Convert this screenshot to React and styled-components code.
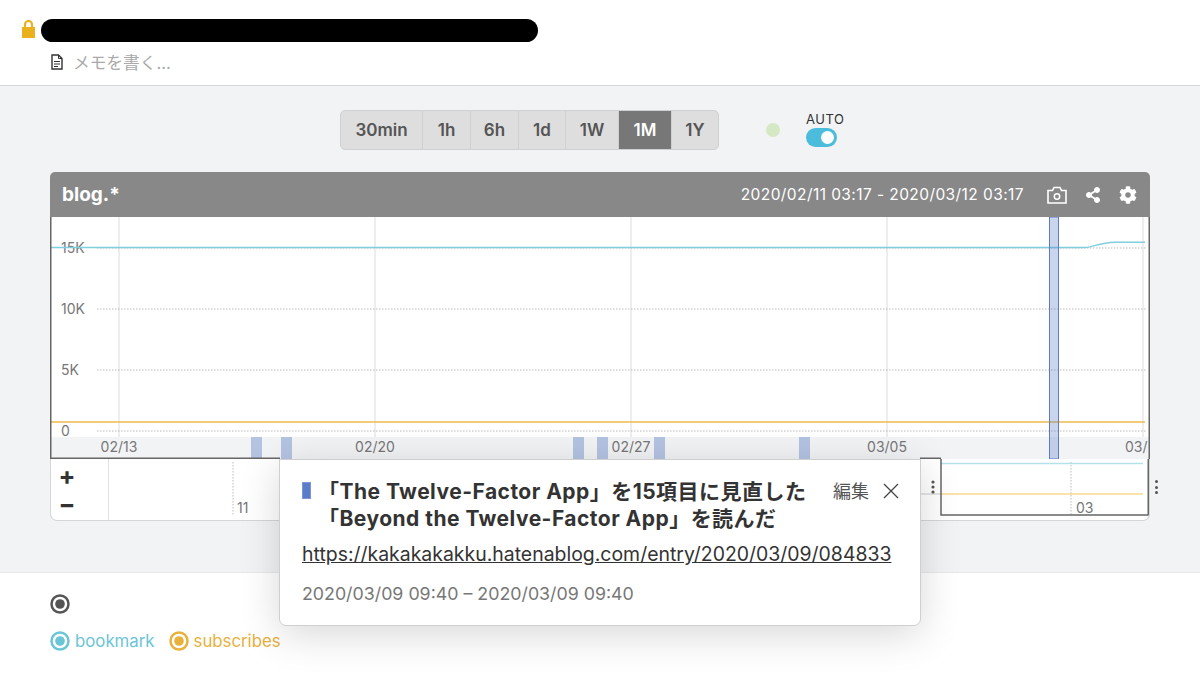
import React from 'react';
import styled, { createGlobalStyle } from 'styled-components';
import { FaShareAlt, FaCog } from 'react-icons/fa';

const GlobalStyle = createGlobalStyle`
  html, body {
    margin: 0;
    padding: 0;
    background: #fff;
    font-family: "Inter", "Noto Sans CJK JP", sans-serif;
    overflow: hidden;
  }
`;

const Page = styled.div`
  width: 1200px;
  height: 693px;
  display: flex;
  flex-direction: column;
`;

const TopBar = styled.header`
  height: 86px;
  flex: none;
  border-bottom: 1px solid #d6d7da;
  background: #fff;
  padding: 19px 0 0 22px;
  box-sizing: border-box;
`;

const TitleRow = styled.div`
  display: flex;
  align-items: center;
  gap: 6px;
  height: 23px;
`;

const Redacted = styled.div`
  width: 497px;
  height: 23px;
  background: #000;
  border-radius: 12px;
`;

const MemoRow = styled.div`
  display: flex;
  align-items: center;
  gap: 10px;
  margin: 10px 0 0 29px;
  height: 20px;
  color: #aaa;
  font-size: 16.7px;
`;

const Main = styled.main`
  height: 487px;
  flex: none;
  background: #f2f3f5;
  border-bottom: 1px solid #e8e9eb;
  padding: 24px 50px 0;
  box-sizing: border-box;
`;

const Controls = styled.div`
  display: flex;
  height: 40px;
  padding-left: 290px;
  align-items: center;
`;

const RangeGroup = styled.div`
  display: flex;
  height: 40px;
  box-sizing: border-box;
  border: 1px solid #cfd0d2;
  border-radius: 5px;
  background: #dedede;
  overflow: hidden;
`;

const RangeButton = styled.div`
  width: ${(p) => p.$w}px;
  display: flex;
  align-items: center;
  justify-content: center;
  box-sizing: border-box;
  border-right: ${(p) => (p.$last ? 'none' : '1px solid #cfd0d2')};
  background: ${(p) => (p.$active ? '#777' : 'transparent')};
  color: ${(p) => (p.$active ? '#fff' : '#555')};
  font-size: 17px;
  font-weight: 600;
`;

const StatusDot = styled.div`
  width: 14px;
  height: 14px;
  border-radius: 50%;
  background: #d5e8c4;
  margin-left: 47px;
`;

const AutoBox = styled.div`
  margin-left: 26px;
  display: flex;
  flex-direction: column;
  align-items: flex-start;
  margin-top: -2px;
`;

const AutoLabel = styled.div`
  font-size: 13px;
  line-height: 16px;
  color: #333;
  letter-spacing: 0.5px;
`;

const Toggle = styled.div`
  width: 31px;
  height: 19px;
  margin-top: 1px;
  border-radius: 10px;
  background: #4bbcdc;
  position: relative;

  &::after {
    content: '';
    position: absolute;
    top: 3px;
    right: 3px;
    width: 13px;
    height: 13px;
    border-radius: 50%;
    background: #fff;
  }
`;

const Card = styled.section`
  position: relative;
  width: 1100px;
  margin-top: 22px;
  height: 349px;
`;

const CardHeader = styled.div`
  height: 45px;
  background: #888;
  border-radius: 5px 5px 0 0;
  color: #fff;
  display: flex;
  align-items: center;
  padding: 0 13px 0 12px;
`;

const CardTitle = styled.div`
  font-size: 19px;
  font-weight: 700;
  flex: 1;
`;

const Period = styled.div`
  font-size: 15.5px;
  letter-spacing: 0.42px;
  margin-right: 23px;
`;

const HeaderIcons = styled.div`
  display: flex;
  align-items: center;
  gap: 18px;
`;

const ChartSvg = styled.svg`
  display: block;
  width: 1100px;
  height: 242px;
  background: #fff;
`;

const MiniRow = styled.div`
  display: flex;
  height: 62px;
  background: #fff;
  border: 1px solid #d5d6d8;
  border-top: none;
  border-radius: 0 0 7px 7px;
  box-sizing: border-box;
  overflow: hidden;
`;

const ZoomButtons = styled.div`
  width: 58px;
  flex: none;
  display: flex;
  flex-direction: column;
  align-items: center;
  padding: 3px 25px 0 0;
  box-sizing: border-box;
  border-right: 1px solid #e2e2e2;
  font-size: 25px;
  line-height: 28px;
  font-weight: 700;
  color: #333;
`;

const MiniSvg = styled.svg`
  display: block;
  flex: none;
  width: 1040px;
  height: 62px;
`;

const OuterHandle = styled.div`
  position: absolute;
  left: 1105px;
  top: 308px;
  display: flex;
  flex-direction: column;
  gap: 2.5px;

  span {
    width: 3px;
    height: 3px;
    border-radius: 50%;
    background: #555;
  }
`;

const Popup = styled.div`
  position: absolute;
  left: 229px;
  top: 287px;
  width: 642px;
  height: 167px;
  box-sizing: border-box;
  background: #fff;
  border: 1px solid #cfcfcf;
  border-radius: 0 0 7px 7px;
  box-shadow: 0 8px 40px rgba(0, 0, 0, 0.16);
  padding: 18px 21px 0 22px;
  z-index: 2;
`;

const PopupHead = styled.div`
  display: flex;
  align-items: flex-start;
`;

const Marker = styled.div`
  width: 9px;
  height: 17px;
  flex: none;
  margin-top: 4px;
  background: #5b7cc8;
  border: 1px solid #7c97d6;
  box-sizing: border-box;
`;

const PopupTitle = styled.div`
  flex: 1;
  margin-left: 7px;
  font-size: 21px;
  line-height: 27px;
  font-weight: 700;
  letter-spacing: 0.47px;
  color: #333;
  white-space: nowrap;
`;

const EditLink = styled.div`
  font-size: 18px;
  line-height: 27px;
  color: #555;
  margin-right: 14px;
`;

const CloseIcon = styled.svg`
  margin-top: 5px;
  display: block;
`;

const PopupLink = styled.a`
  display: block;
  margin-top: 9px;
  font-size: 19.45px;
  line-height: 27px;
  color: #333;
  text-decoration: underline;
  white-space: nowrap;
`;

const PopupDate = styled.div`
  margin-top: 15px;
  font-size: 17.8px;
  line-height: 22px;
  color: #777;
`;

const Footer = styled.footer`
  flex: 1;
  background: #fff;
  padding: 21px 0 0 50px;
`;

const Legend = styled.div`
  display: flex;
  align-items: center;
  margin-top: 17px;
  gap: 14px;
`;

const LegendItem = styled.div`
  display: flex;
  align-items: center;
  gap: 5px;
  font-size: 16.8px;
  color: ${(p) => p.$color};
`;

const Ring = ({ color }) => (
  <svg width="20" height="20" viewBox="0 0 20 20" style={{ display: 'block' }}>
    <circle cx="10" cy="10" r="8.5" fill="none" stroke={color} strokeWidth="2.5" />
    <circle cx="10" cy="10" r="4.8" fill={color} />
  </svg>
);

const LockIcon = () => (
  <svg width="13" height="18" viewBox="0 0 13 18" style={{ display: 'block', marginTop: '-3px' }}>
    <path d="M3 8V4.500a3.500 3.500 0 0 1 7 0V8" fill="none" stroke="#ebb01e" strokeWidth="2.200" />
    <rect x="0" y="7" width="13" height="11" fill="#ebb01e" />
  </svg>
);

const NoteIcon = () => (
  <svg width="12" height="16" viewBox="0 0 12 16" style={{ display: 'block' }}>
    <path d="M1 1h6.500L11 4.500V15H1z" fill="none" stroke="#333" strokeWidth="1.400" />
    <path d="M7.500 1v3.500H11M3 7.500h6M3 10h6M3 12.500h4" fill="none" stroke="#333" strokeWidth="1" />
  </svg>
);

const CameraIcon = () => (
  <svg width="20" height="18" viewBox="0 0 20 18" style={{ display: 'block' }}>
    <path d="M1 4.500h4.500L7 1.500h6l1.500 3H19V17H1z" fill="none" stroke="#fff" strokeWidth="1.600" />
    <circle cx="10" cy="10.500" r="2.700" fill="none" stroke="#fff" strokeWidth="1.500" />
  </svg>
);

const ranges = [
  { label: '30min', w: 82 },
  { label: '1h', w: 48 },
  { label: '6h', w: 48 },
  { label: '1d', w: 47 },
  { label: '1W', w: 53 },
  { label: '1M', w: 53, active: true },
  { label: '1Y', w: 46, last: true },
];

// chart coordinates are page x minus 50, page y minus 217
const gridX = [69, 325, 581, 837, 1093];
const dateLabels = ['02/13', '02/20', '02/27', '03/05', '03/'];
const levels = [
  { label: '15K', y: 31 },
  { label: '10K', y: 92 },
  { label: '5K', y: 153 },
  { label: '0', y: 214 },
];
const notes = [201, 231, 523, 547, 604, 749];

const Chart = () => (
  <ChartSvg viewBox="0 0 1100 242">
    <rect x="1" y="220" width="1098" height="22" fill="#f2f3f5" />
    {gridX.map((x) => (
      <line key={x} x1={x} x2={x} y1="0" y2="220" stroke="#dcdcdc" />
    ))}
    {levels.map((l) => (
      <g key={l.label}>
        <line x1="47" x2="1097" y1={l.y} y2={l.y} stroke="#bbb" strokeDasharray="1.500 1.500" />
        <text x="11" y={l.y + 5} fontSize="14" fill="#777">{l.label}</text>
      </g>
    ))}
    {gridX.map((x, i) => (
      <text
        key={x}
        x={i === 4 ? x - 18 : x}
        y="235"
        fontSize="14"
        fill="#777"
        textAnchor={i === 4 ? 'start' : 'middle'}
      >
        {dateLabels[i]}
      </text>
    ))}
    {notes.map((x) => (
      <rect key={x} x={x} y="220" width="11" height="22" fill="#b3c3e2" />
    ))}
    <path d="M1 30.500H1035C1042 30.500 1050 25.500 1065 25.300H1095" fill="none" stroke="#7fd0dc" strokeWidth="1.500" />
    <line x1="1" x2="1095" y1="205" y2="205" stroke="#ecb84f" strokeWidth="1.500" />
    <rect x="999.500" y="0" width="9" height="242" fill="#5b7cc8" fillOpacity="0.32" stroke="#5b7cc8" />
    <path d="M0.750 0V241.250M1099.250 0V242" fill="none" stroke="#666" strokeWidth="1.500" />
    <line x1="0" x2="230" y1="241.250" y2="241.250" stroke="#666" strokeWidth="1.500" />
    <line x1="870" x2="891" y1="241.250" y2="241.250" stroke="#666" strokeWidth="1.500" />
  </ChartSvg>
);

// mini chart x is page x minus 109, y is page y minus 459
const MiniChart = () => (
  <MiniSvg viewBox="0 0 1040 62">
    <line x1="124" x2="124" y1="3" y2="56" stroke="#bbb" strokeDasharray="1.500 1.500" />
    <text x="128" y="54" fontSize="14" fill="#777">11</text>
    <line x1="962" x2="962" y1="3" y2="56" stroke="#bbb" strokeDasharray="1.500 1.500" />
    <text x="967" y="54" fontSize="14" fill="#777">03</text>
    <line x1="832" x2="1034" y1="4.500" y2="4.500" stroke="#b5e2e8" strokeWidth="1.500" />
    <line x1="812" x2="832" y1="35" y2="35" stroke="#ccc" />
    <line x1="832" x2="1034" y1="35" y2="35" stroke="#f8d98f" strokeWidth="1.500" />
    <path d="M832 0V56H1039.250V0" fill="none" stroke="#666" strokeWidth="1.500" />
    <circle cx="824" cy="23" r="1.600" fill="#555" />
    <circle cx="824" cy="28" r="1.600" fill="#555" />
    <circle cx="824" cy="33" r="1.600" fill="#555" />
  </MiniSvg>
);

export default function App() {
  return (
    <Page>
      <GlobalStyle />
      <TopBar>
        <TitleRow>
          <LockIcon />
          <Redacted />
        </TitleRow>
        <MemoRow>
          <NoteIcon />
          メモを書く...
        </MemoRow>
      </TopBar>
      <Main>
        <Controls>
          <RangeGroup>
            {ranges.map((r) => (
              <RangeButton key={r.label} $w={r.w} $active={r.active} $last={r.last}>
                {r.label}
              </RangeButton>
            ))}
          </RangeGroup>
          <StatusDot />
          <AutoBox>
            <AutoLabel>AUTO</AutoLabel>
            <Toggle />
          </AutoBox>
        </Controls>
        <Card>
          <CardHeader>
            <CardTitle>blog.*</CardTitle>
            <Period>2020/02/11 03:17 - 2020/03/12 03:17</Period>
            <HeaderIcons>
              <CameraIcon />
              <FaShareAlt size={16} color="#fff" />
              <FaCog size={18} color="#fff" />
            </HeaderIcons>
          </CardHeader>
          <Chart />
          <MiniRow>
            <ZoomButtons>
              <span>+</span>
              <span>−</span>
            </ZoomButtons>
            <MiniChart />
          </MiniRow>
          <OuterHandle>
            <span />
            <span />
            <span />
          </OuterHandle>
          <Popup>
            <PopupHead>
              <Marker />
              <PopupTitle>
                「The Twelve-Factor App」を15項目に見直した
                <br />
                「Beyond the Twelve-Factor App」を読んだ
              </PopupTitle>
              <EditLink>編集</EditLink>
              <CloseIcon width="16" height="16" viewBox="0 0 16 16">
                <path d="M1 1l14 14M15 1L1 15" stroke="#444" strokeWidth="1.300" />
              </CloseIcon>
            </PopupHead>
            <PopupLink>https://kakakakakku.hatenablog.com/entry/2020/03/09/084833</PopupLink>
            <PopupDate>2020/03/09 09:40 – 2020/03/09 09:40</PopupDate>
          </Popup>
        </Card>
      </Main>
      <Footer>
        <Ring color="#555" />
        <Legend>
          <LegendItem $color="#6cc5d6">
            <Ring color="#6cc5d6" />
            bookmark
          </LegendItem>
          <LegendItem $color="#e8b13c">
            <Ring color="#e8b13c" />
            subscribes
          </LegendItem>
        </Legend>
      </Footer>
    </Page>
  );
}
